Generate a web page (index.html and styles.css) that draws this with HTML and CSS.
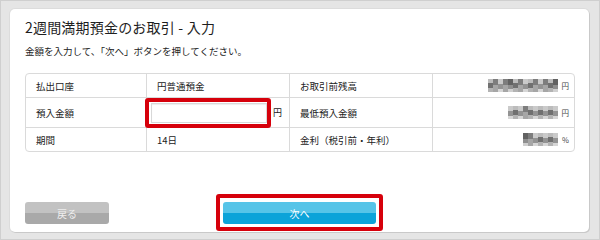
FILE: index.html
```html
<!DOCTYPE html>
<html lang="ja">
<head>
<meta charset="utf-8">
<link rel="stylesheet" href="styles.css">
</head>
<body>
<div class="frame">
  <div class="panel">
    <h1 class="title">2週間満期預金のお取引 - 入力</h1>
    <p class="lead">金額を入力して、「次へ」ボタンを押してください。</p>
    <div class="table">
      <div class="cell label r1">払出口座</div>
      <div class="cell r1">円普通預金</div>
      <div class="cell r1">お取引前残高</div>
      <div class="cell value r1"><span class="mosaic"><i class="c2"></i><i class="c1"></i><i class="c3"></i><i class="c1"></i><i class="c4"></i><i class="c2"></i><i class="c1"></i><i class="c3"></i><i class="c2"></i><i class="c1"></i><i class="c3"></i><i class="c1"></i><i class="c2"></i><i class="c4"></i></span><span class="unit">円</span></div>

      <div class="cell label r2">預入金額</div>
      <div class="cell input-cell r2"><span class="field-wrap"><span class="field"></span><span class="mark"></span></span><span class="unit-in">円</span></div>
      <div class="cell r2">最低預入金額</div>
      <div class="cell value r2"><span class="mosaic"><i class="c3"></i><i class="c2"></i><i class="c3"></i><i class="c1"></i><i class="c2"></i><i class="c3"></i><i class="c2"></i><i class="c3"></i><i class="c2"></i><i class="c3"></i></span><span class="unit">円</span></div>

      <div class="cell label r3">期間</div>
      <div class="cell r3">14日</div>
      <div class="cell r3">金利（税引前・年利）</div>
      <div class="cell value r3"><span class="mosaic"><i class="c4"></i><i class="c1"></i><i class="c3"></i><i class="c2"></i><i class="c3"></i><i class="c2"></i><i class="c3"></i></span><span class="unit pct">%</span></div>
    </div>
    <div class="actions">
      <button class="btn back">戻る</button>
      <span class="next-wrap"><button class="btn next">次へ</button><span class="mark"></span></span>
    </div>
  </div>
</div>
</body>
</html>
```
FILE: styles.css
```css
* { box-sizing: border-box; }
html, body { margin: 0; padding: 0; }
body {
  width: 600px;
  height: 240px;
  background: #e5e5e5;
  font-family: "Noto Sans CJK JP", "Noto Sans", sans-serif;
  color: #222;
  overflow: hidden;
}
.frame {
  width: 600px;
  height: 240px;
  border: 1px solid #cfcfcf;
  padding: 8px 11px 0 9px;
}
.panel {
  width: 579px;
  height: 223px;
  background: #fff;
  border-radius: 5px;
  box-shadow: 1px 1px 0 #c9c9c9, 0 0 0 1px #dcdcdc;
  padding: 9px 14px 0 15px;
}
.title {
  margin: 0;
  font-size: 14px;
  font-weight: normal;
  line-height: 18px;
  color: #1e1e1e;
  letter-spacing: 0.2px;
}
.lead {
  margin: 8px 0 0;
  font-size: 9.5px;
  line-height: 14px;
  color: #222;
}
.table {
  margin-top: 15px;
  display: grid;
  grid-template-columns: 120px 143px 143px 143px;
  grid-template-rows: 23px 30px 24px;
  border: 1px solid #dadada;
  border-radius: 4px;
  width: 550px;
}
.cell {
  display: flex;
  align-items: center;
  padding-left: 10px;
  font-size: 9.5px;
  color: #222;
  border-left: 1px solid #dadada;
  border-top: 1px solid #dadada;
}
.cell.label { border-left: none; }
.cell.r1 { border-top: none; }
.cell.value {
  justify-content: flex-end;
  padding-right: 6px;
}
.input-cell { padding-left: 4px; }
.field-wrap { position: relative; display: block; }
.field {
  display: block;
  width: 116px;
  height: 20px;
  border: 1px solid #d8d8d8;
  background: #fff;
  box-shadow: inset 0 1px 1px #eee;
}
.field-wrap .mark {
  position: absolute;
  left: -6px;
  top: -5px;
  width: 126px;
  height: 30px;
  border: 4px solid #d6000b;
  border-radius: 3px;
}
.unit-in { margin-left: 6px; font-size: 9px; }
.unit { margin-left: 4px; font-size: 7.5px; color: #444; }
.mosaic {
  display: flex;
  height: 13px;
  filter: blur(0.3px);
}
.mosaic i {
  display: block;
  width: 5px;
  height: 100%;
}
.c1 { background: linear-gradient(#7d7d7d 0 45%, #a6a6a6 45% 100%); }
.c2 { background: linear-gradient(#bcbcbc 0 30%, #707070 30% 70%, #b3b3b3 70%); }
.c3 { background: linear-gradient(#cacaca 0 40%, #939393 40% 75%, #d6d6d6 75%); }
.c4 { background: linear-gradient(#626262 0 50%, #8f8f8f 50% 80%, #cfcfcf 80%); }
.actions {
  margin-top: 50px;
  display: flex;
  align-items: center;
}
.btn {
  border: none;
  font-family: "Noto Sans CJK JP", sans-serif;
  font-size: 10px;
  color: #fff;
  height: 22px;
  border-radius: 3px;
  padding: 0;
}
.back {
  width: 84px;
  background: linear-gradient(#c2c2c2 0 50%, #a9a9a9 50% 100%);
  color: #eee;
}
.next-wrap {
  position: relative;
  margin-left: 114px;
  display: block;
}
.next {
  display: block;
  width: 153px;
  background: linear-gradient(#56c4e8 0 50%, #0ba3d9 50% 100%);
}
.next-wrap .mark {
  position: absolute;
  left: -7px;
  top: -8px;
  width: 167px;
  height: 37px;
  border: 4px solid #d6000b;
  border-radius: 3px;
}
```
